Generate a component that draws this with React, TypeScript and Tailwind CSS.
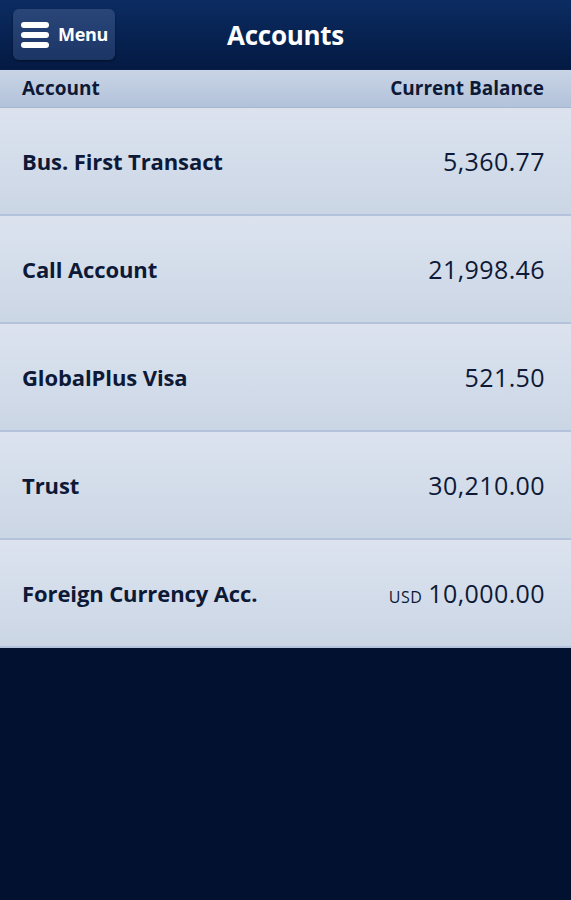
const rows = [
  { name: 'Bus. First Transact', balance: '5,360.77' },
  { name: 'Call Account', balance: '21,998.46' },
  { name: 'GlobalPlus Visa', balance: '521.50' },
  { name: 'Trust', balance: '30,210.00' },
  { name: 'Foreign Currency Acc.', balance: '10,000.00', currency: 'USD' },
];

export default function App() {
  return (
    <div
      className="w-[571px] h-[900px] flex flex-col bg-[#01112f] text-[#0d1936]"
      style={{ fontFamily: '"Open Sans", "Noto Sans", sans-serif' }}
    >
      <div className="h-[69px] shrink-0 relative flex items-center justify-center bg-gradient-to-b from-[#0c2c62] to-[#041a43]">
        <button className="absolute left-[13px] top-[9px] w-[102px] h-[51px] rounded-md bg-gradient-to-b from-[#2a4679] to-[#1b3565] shadow-[0_1px_2px_rgba(0,0,0,0.5)] flex items-center gap-[9px] pl-[8px]">
          <div className="flex flex-col gap-[4px]">
            <span className="block w-[28px] h-[6px] rounded-full bg-white" />
            <span className="block w-[28px] h-[6px] rounded-full bg-white" />
            <span className="block w-[28px] h-[6px] rounded-full bg-white" />
          </div>
          <span className="text-white text-[18px] font-bold tracking-[-0.3px]">Menu</span>
        </button>
        <h1 className="text-white text-[26px] font-bold tracking-[-0.3px] leading-none">Accounts</h1>
      </div>

      <div className="h-[39px] shrink-0 flex items-center justify-between pl-[22px] pr-[27px] bg-gradient-to-b from-[#c9d4e6] to-[#b2c2da] border-t border-[#0a1f48] border-b border-b-[#a7b6cf]">
        <span className="text-[19px] font-bold">Account</span>
        <span className="text-[19px] font-bold">Current Balance</span>
      </div>

      {rows.map((r) => (
        <div
          key={r.name}
          className="h-[108px] shrink-0 flex items-center justify-between pl-[22px] pr-[26px] bg-gradient-to-b from-[#dce3ef] to-[#cbd6e5] border-b-2 border-[#b4c3db]"
        >
          <span className="text-[22px] font-bold tracking-[-0.1px] pt-[1px]">{r.name}</span>
          <span className="flex items-baseline gap-[6px] pt-[2px]">
            {r.currency && <span className="text-[16px] tracking-[0.5px]">{r.currency}</span>}
            <span className="text-[25px] tracking-[0.4px]">{r.balance}</span>
          </span>
        </div>
      ))}

      <div className="flex-1" />
    </div>
  );
}
